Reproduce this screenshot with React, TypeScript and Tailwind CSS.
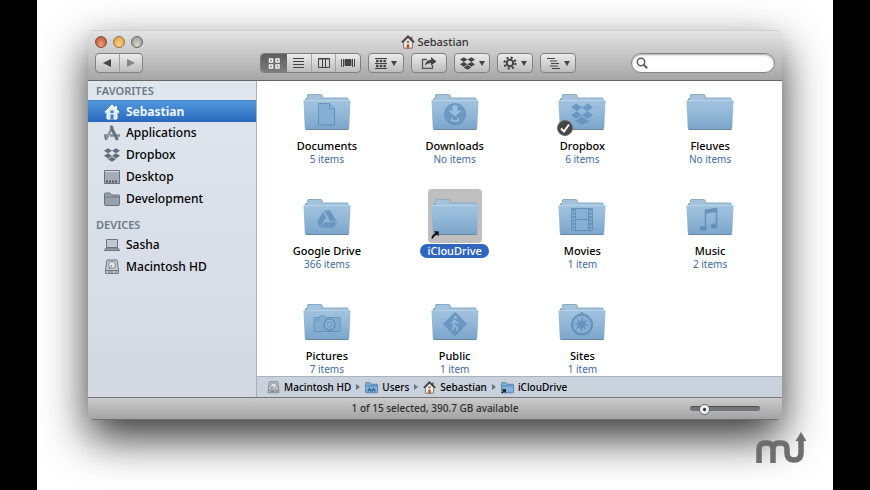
import React from 'react';
import { FaCog, FaDropbox, FaGoogleDrive } from 'react-icons/fa';

type Glyph =
	| 'document'
	| 'download'
	| 'dropbox'
	| 'drive'
	| 'film'
	| 'music'
	| 'camera'
	| 'public'
	| 'compass';

interface FolderItem {
	name: string;
	count?: string;
	glyph?: Glyph;
	synced?: boolean;
	selected?: boolean;
}

const folders: FolderItem[] = [
	{ name: 'Documents', count: '5 items', glyph: 'document' },
	{ name: 'Downloads', count: 'No items', glyph: 'download' },
	{ name: 'Dropbox', count: '6 items', glyph: 'dropbox', synced: true },
	{ name: 'Fleuves', count: 'No items' },
	{ name: 'Google Drive', count: '366 items', glyph: 'drive' },
	{ name: 'iClouDrive', selected: true },
	{ name: 'Movies', count: '1 item', glyph: 'film' },
	{ name: 'Music', count: '2 items', glyph: 'music' },
	{ name: 'Pictures', count: '7 items', glyph: 'camera' },
	{ name: 'Public', count: '1 item', glyph: 'public' },
	{ name: 'Sites', count: '1 item', glyph: 'compass' },
];

const FolderGlyph = ({ glyph }: { glyph: Glyph }) => {
	switch (glyph) {
		case 'document':
			return (
				<path
					d="M15.5 10.5h11l5 5.500v16h-16zM26.500 10.500v5.500h5"
					fill="#84aed2"
					stroke="#5b89b5"
				/>
			);
		case 'download':
			return (
				<>
					<circle cx="24" cy="21" r="10.500" fill="#6594bf" stroke="#5b89b5" />
					<path d="M21.500 12.500h5v5h4l-6.500 6-6.500-6h4z" fill="#9cc2e2" />
					<path d="M21 25v3h6v-3" fill="none" stroke="#9cc2e2" strokeWidth="1.500" />
				</>
			);
		case 'dropbox':
			return (
				<g fill="#6090bc">
					<path d="M18 10.500l6 3.800-5 4-6-4zM30 10.500l-6 3.800 5 4 6-4z" />
					<path d="M13 22l6-3.700 5 4-5.500 3.700zM35 22l-6-3.700-5 4 5.500 3.700z" />
					<path d="M17.500 26.500l1.200.8 5.300-3.800 5.300 3.800 1.200-.8v2L24 32l-6.500-3.500z" />
				</g>
			);
		case 'drive':
			return <FaGoogleDrive x="14" y="11" size={20} color="#6090bc" />;
		case 'film':
			return (
				<>
					<path d="M13.500 10.500h21v22h-21z" fill="#84aed2" stroke="#5b89b5" />
					<path
						d="M15.500 11v22M32.500 11v22"
						stroke="#5b89b5"
						strokeWidth="2.500"
						strokeDasharray="2 1.500"
					/>
					<path d="M17.500 11v21.500M30.500 11v21.500M18 21.500h12" stroke="#5b89b5" />
				</>
			);
		case 'music':
			return (
				<>
					<path d="M19.500 30V12.500l11-2V27" fill="none" stroke="#5b89b5" strokeWidth="1.600" />
					<path d="M19 12l12-2v4l-12 2z" fill="#5b89b5" />
					<ellipse cx="17" cy="30.500" rx="3.400" ry="2.500" fill="#5b89b5" />
					<ellipse cx="28" cy="28" rx="3.400" ry="2.500" fill="#5b89b5" />
				</>
			);
		case 'camera':
			return (
				<>
					<path
						d="M12 14.500h4l1-1.500h4l1 1.500h14q1 0 1 1v12q0 1-1 1H12q-1 0-1-1v-12q0-1 1-1z"
						fill="#7eaad0"
						stroke="#5b89b5"
					/>
					<circle cx="26.500" cy="21.500" r="5.500" fill="#8ab4d8" stroke="#5b89b5" strokeWidth="1.500" />
					<circle cx="26.500" cy="21.500" r="2.500" fill="none" stroke="#5b89b5" />
					<path d="M13 17h4" stroke="#5b89b5" />
				</>
			);
		case 'public':
			return (
				<>
					<path d="M24 9.500 35.500 21 24 32.500 12.500 21z" fill="#6191bd" stroke="#5787b4" />
					<circle cx="24.500" cy="14.500" r="1.500" fill="#9cc2e2" />
					<path
						d="M24 17l-1 5 3 2.500v3.500M23 22l-1.500 5.500M20.500 20.500l3-3 4 3"
						fill="none"
						stroke="#9cc2e2"
						strokeWidth="1.200"
					/>
				</>
			);
		case 'compass':
			return (
				<>
					<circle cx="24" cy="21.500" r="10" fill="#84aed2" stroke="#5b89b5" strokeWidth="2" />
					<circle cx="24" cy="10.500" r="1.500" fill="#5b89b5" />
					<path
						d="M24 14l1.200 4.500 4-2-2.500 4 4.300 1-4.500 1.500 2 4-3.700-2.500L23 29l-1-5-4 2.500 2.200-4-4.200-1.500 4.500-1-2-4 4 2.500z"
						fill="#5b89b5"
					/>
				</>
			);
	}
};

const Folder = ({ glyph }: { glyph?: Glyph }) => (
	<svg viewBox="0 0 48 38" className="w-12 h-[38px]" aria-hidden="true">
		<defs>
			<linearGradient id="folderFront" x1="0" y1="0" x2="0" y2="1">
				<stop offset="0" stopColor="#a2c3de" />
				<stop offset="0.500" stopColor="#90b6d7" />
				<stop offset="1" stopColor="#7aa5cb" />
			</linearGradient>
		</defs>
		<path
			d="M2 9V6q0-1 1-1h1V2.500Q4 1 5.500 1h12Q19 1 19.500 2.500l.5 2h24q1.500 0 1.500 1.500v4z"
			fill="#87adcb"
		/>
		<path d="M5 3q0-1 1-1h11q1 0 1.500 1l.5 2.500H44V7H4z" fill="#a3c3dc" />
		<path
			d="M1.500 7h45q1 0 1 1.200L46.200 35q-.2 1.500-1.700 1.500h-41Q2 36.500 1.800 35L.5 8.200Q.5 7 1.500 7z"
			fill="url(#folderFront)"
		/>
		<path d="M1 7.500h46" stroke="#b7d3e8" />
		<path d="M2.500 36.500h43" stroke="#66879f" />
		{glyph && (
			<g opacity="0.800">
				<FolderGlyph glyph={glyph} />
			</g>
		)}
	</svg>
);

const House = ({ className, white }: { className: string; white?: boolean }) => (
	<svg viewBox="0 0 16 16" className={className} aria-hidden="true">
		<path d="M3 8l5-5 5 5v7H3z" fill={white ? '#d8e9fa' : '#f4f0ea'} stroke={white ? '#fff' : '#6b6560'} />
		<path d="M11 2h2v4h-2z" fill={white ? '#fff' : '#5f5a56'} />
		<path
			d="M1 8.500L8 1.500l7 7"
			fill="none"
			stroke={white ? '#fff' : '#47403b'}
			strokeWidth={white ? 1.500 : 2}
		/>
		<path d="M6.500 10.500h3v5h-3z" fill={white ? '#3f80cc' : '#c0562f'} />
		<path d="M6.500 6.500h3v2.500h-3z" fill={white ? '#3f80cc' : '#8a7d74'} />
	</svg>
);

const Disk = ({ className }: { className: string }) => (
	<svg viewBox="0 0 16 16" className={className} aria-hidden="true">
		<path d="M3 1h10l1.500 10v3.500h-13V11z" fill="#c3c8ce" stroke="#747b83" />
		<circle cx="8" cy="6" r="3.500" fill="#e4e7ea" stroke="#868d95" />
		<path d="M8 6l-3 4" stroke="#747b83" />
		<path d="M2 11.500h12M4 13h5M11 13h2" stroke="#747b83" />
	</svg>
);

const MiniFolder = ({
	className,
	fill,
	stroke,
	children,
}: {
	className: string;
	fill: string;
	stroke: string;
	children?: React.ReactNode;
}) => (
	<svg viewBox="0 0 16 16" className={className} aria-hidden="true">
		<path d="M.5 13.500V3q0-1 1-1H6l1.500 2h7q1 0 1 1v8.500q0 1-1 1h-13q-1 0-1-1z" fill={fill} stroke={stroke} />
		<path d="M1 6h14" stroke={stroke} />
		{children}
	</svg>
);

const SidebarIcon = ({ name }: { name: string }) => {
	const size = 'w-4 h-4';
	switch (name) {
		case 'Sebastian':
			return <House className={size} white />;
		case 'Applications':
			return (
				<svg viewBox="0 0 16 16" className={size} aria-hidden="true">
					<path d="M0 10.500h4M6 10.500h4M12 10.500h4" stroke="#7f8994" strokeWidth="2.500" />
					<path d="M2 14.500L8.500 2" fill="none" stroke="#8b949e" strokeWidth="2.500" />
					<path d="M7 2l6.500 13" stroke="#67717b" strokeWidth="3" />
					<path d="M1 11.500L2 15M6 1l3 1" stroke="#67717b" strokeWidth="1.500" />
				</svg>
			);
		case 'Dropbox':
			return <FaDropbox className="w-4 h-4 text-[#626e7b]" aria-hidden="true" />;
		case 'Desktop':
			return (
				<svg viewBox="0 0 16 16" className={size} aria-hidden="true">
					<path d="M.5 1.500h15v13H.5z" fill="#a3abb4" stroke="#68717b" />
					<path d="M1 2.500h14" stroke="#d7dce1" />
					<path d="M2 12.500h12" stroke="#4f5862" strokeWidth="2" strokeDasharray="2 1" />
				</svg>
			);
		case 'Development':
			return <MiniFolder className={size} fill="#98a2ad" stroke="#68727d" />;
		case 'Sasha':
			return (
				<svg viewBox="0 0 16 16" className={size} aria-hidden="true">
					<path d="M2.500 2.500h11v8h-11z" fill="#c0c7cf" stroke="#6b747e" />
					<path d="M2 11h12l1.500 2.500H.5z" fill="#9aa3ac" stroke="#6b747e" />
				</svg>
			);
		default:
			return <Disk className={size} />;
	}
};

const sections = [
	{
		title: 'FAVORITES',
		items: ['Sebastian', 'Applications', 'Dropbox', 'Desktop', 'Development'],
	},
	{ title: 'DEVICES', items: ['Sasha', 'Macintosh HD'] },
];

const Sidebar = () => (
	<nav
		aria-label="Sidebar"
		className="w-[169px] shrink-0 border-r border-[#a9b0b8] bg-linear-to-b from-[#e0e6ee] to-[#d2d9e3]"
	>
		{sections.map((section) => (
			<div key={section.title} className="mb-[5px]">
				<h2 className="h-[19px] pl-2 pt-[2px] text-[11px] leading-4 font-semibold text-[#6d7a88]">
					{section.title}
				</h2>
				<ul>
					{section.items.map((item) => (
						<li key={item}>
							<a
								href="#"
								className={
									item === 'Sebastian'
										? 'flex h-[22px] items-center gap-[6px] border-t border-[#4280c2] bg-linear-to-b from-[#5298dc] to-[#2a68bd] pl-4 text-[12px] font-bold text-[#eef5ff]'
										: 'flex h-[22px] items-center gap-[6px] pl-4 text-[12px] font-medium text-black'
								}
							>
								<SidebarIcon name={item} />
								{item}
							</a>
						</li>
					))}
				</ul>
			</div>
		))}
	</nav>
);

const Caret = () => (
	<svg viewBox="0 0 6 5" className="w-[6px] h-[5px]" aria-hidden="true">
		<path d="M0 0h6L3 5z" fill="#444" />
	</svg>
);

const toolButton =
	'flex h-5 w-9 items-center justify-center gap-1 rounded-[4px] border border-[#828282] bg-linear-to-b from-[#ececec] to-[#bcbcbc] text-[#444]';

const ViewSwitch = () => (
	<div className="flex h-5 w-[101px] overflow-hidden rounded-[4px] border border-[#7d7d7d] bg-linear-to-b from-[#ececec] to-[#bcbcbc]">
		<button
			aria-label="Icon view"
			aria-pressed="true"
			className="flex w-[26px] items-center justify-center bg-linear-to-b from-[#5d5d5d] to-[#7c7c7c]"
		>
			<svg viewBox="0 0 12 11" className="w-3 h-[11px]" fill="none" stroke="#f2f2f2" strokeWidth="1.500">
				<path d="M1.500 1h3v3h-3zM8 1h3v3H8zM1.500 7h3v3h-3zM8 7h3v3H8z" />
			</svg>
		</button>
		<button aria-label="List view" className="flex flex-1 items-center justify-center border-r border-[#a5a5a5]">
			<svg viewBox="0 0 11 10" className="w-[11px] h-[10px]" stroke="#444">
				<path d="M0 .5h11M0 3.500h11M0 6.500h11M0 9.500h11" />
			</svg>
		</button>
		<button aria-label="Column view" className="flex flex-1 items-center justify-center border-r border-[#a5a5a5]">
			<svg viewBox="0 0 12 10" className="w-3 h-[10px]" fill="none" stroke="#444">
				<path d="M.5 .5h11v9H.5zM0 1h12M4.500 1v9M7.500 1v9" />
			</svg>
		</button>
		<button aria-label="Cover flow" className="flex flex-1 items-center justify-center">
			<svg viewBox="0 0 14 10" className="w-[14px] h-[10px]" stroke="#444">
				<path d="M.5 1v8M2.500 1v8M11.500 1v8M13.500 1v8" />
				<path d="M4 1.500h6v6H4z" fill="#444" />
			</svg>
		</button>
	</div>
);

const Toolbar = () => (
	<header className="h-[51px] border-t border-b border-t-[#cfcfcf] border-b-[#666] bg-linear-to-b from-[#e4e4e4] to-[#a6a6a6] px-[7px]">
		<div className="relative flex h-[22px] items-center justify-center">
			<div className="absolute left-0 flex gap-[6px]">
				<button aria-label="Close" className="size-3 rounded-full border border-[#7e4a3e] bg-radial-[at_50%_80%] from-[#f0a07c] to-[#b5482e]" />
				<button aria-label="Minimize" className="size-3 rounded-full border border-[#96703d] bg-radial-[at_50%_80%] from-[#f8d183] to-[#dc9b48]" />
				<button aria-label="Zoom" className="size-3 rounded-full border border-[#5e646a] bg-radial-[at_50%_80%] from-[#dcd6b8] to-[#8b939c]" />
			</div>
			<h1 className="flex items-center gap-[2px] text-[11px] leading-4 font-medium text-[#333]">
				<House className="size-[14px]" />
				Sebastian
			</h1>
		</div>
		<div className="flex items-center">
			<div className="w-[165px] shrink-0">
				<div className="flex h-5 w-12 rounded-[4px] border border-[#828282] bg-linear-to-b from-[#ececec] to-[#bcbcbc]">
					<button aria-label="Back" className="flex flex-1 items-center justify-center border-r border-[#a0a0a0]">
						<svg viewBox="0 0 8 8" className="size-2">
							<path d="M8 0v8L0 4z" fill="#484848" />
						</svg>
					</button>
					<button aria-label="Forward" className="flex flex-1 items-center justify-center">
						<svg viewBox="0 0 8 8" className="size-2">
							<path d="M0 0v8l8-4z" fill="#858585" />
						</svg>
					</button>
				</div>
			</div>
			<div className="flex gap-[7px]">
				<ViewSwitch />
				<button aria-label="Arrange" className={toolButton}>
					<svg viewBox="0 0 12 11" className="w-3 h-[11px]" stroke="#444">
						<path d="M0 .5h12M0 5.500h12M0 10.500h12" />
						<path d="M1 3h10M1 8h10" strokeWidth="2.500" strokeDasharray="2.500 1.200" />
					</svg>
					<Caret />
				</button>
				<button aria-label="Share" className={toolButton}>
					<svg viewBox="0 0 16 12" className="w-4 h-3">
						<path d="M6 2.500H1.500v9h10V8" fill="none" stroke="#555" strokeWidth="1.300" />
						<path d="M4 8.500Q4.500 3 10 3V0l5.500 4.500L10 8.500V6Q6 6 4 8.500z" fill="#444" />
					</svg>
				</button>
				<button aria-label="Dropbox" className={toolButton}>
					<FaDropbox size={15} />
					<Caret />
				</button>
				<button aria-label="Action" className={toolButton}>
					<svg viewBox="0 0 14 14" className="size-[14px]" fill="none" stroke="#444">
						<circle cx="7" cy="7" r="3.200" strokeWidth="2" />
						<circle cx="7" cy="7" r="5.500" strokeWidth="2.200" strokeDasharray="2.100 2.219" />
					</svg>
					<Caret />
				</button>
				<button aria-label="Outline" className={toolButton}>
					<svg viewBox="0 0 13 11" className="w-[13px] h-[11px]" stroke="#444">
						<path d="M0 .5h8M3 3h7M4 5.500h8M3 8h8M5 10.500h8" />
					</svg>
					<Caret />
				</button>
			</div>
			<label className="ml-auto flex h-5 w-36 items-center rounded-full border border-[#858585] bg-white px-1 shadow-[inset_0_1px_2px_rgba(0,0,0,0.35)]">
				<svg viewBox="0 0 12 12" className="size-3 shrink-0" fill="none" stroke="#5b5b5b">
					<circle cx="5" cy="5" r="3.700" strokeWidth="1.500" />
					<path d="M7.700 7.700l3.500 3.500" strokeWidth="2" />
				</svg>
				<input type="search" aria-label="Search" className="min-w-0 flex-1 bg-transparent px-1 text-[11px] outline-none" />
			</label>
		</div>
	</header>
);

const FolderCell = ({ item }: { item: FolderItem }) => (
	<button className="flex flex-col items-center">
		<span
			className={
				item.selected
					? 'relative flex h-[54px] w-[54px] justify-center rounded-[4px] bg-[#bfbfbf] pt-[9px]'
					: 'relative flex h-[54px] w-[54px] justify-center pt-[9px]'
			}
		>
			<Folder glyph={item.glyph} />
			{item.synced && (
				<svg viewBox="0 0 16 16" className="absolute bottom-[2px] left-[2px] size-4" aria-hidden="true">
					<circle cx="8" cy="8" r="7.500" fill="#454545" stroke="#6b6b6b" />
					<path d="M4 8.500l3 3 5-7" fill="none" stroke="#fff" strokeWidth="2" />
				</svg>
			)}
			{item.selected && (
				<svg viewBox="0 0 8 8" className="absolute bottom-[4px] left-[3px] size-2" aria-hidden="true">
					<path d="M2 0h6v6L6 4Q3 5 2 8H0Q0 4 4 2z" fill="#111" stroke="#fff" strokeWidth="0.400" />
				</svg>
			)}
		</span>
		<span
			className={
				item.selected
					? 'mt-px h-[14px] rounded-full bg-[#2f66c0] px-[7px] text-[11px] leading-[14px] font-medium text-white'
					: 'mt-px h-[14px] text-[11px] leading-[14px] font-medium text-black'
			}
		>
			{item.name}
		</span>
		{item.count && <span className="h-3 text-[10px] leading-3 text-[#3d6c9e]">{item.count}</span>}
	</button>
);

const Crumb = ({ icon, label }: { icon: React.ReactNode; label: string }) => (
	<a href="#" className="flex items-center gap-1">
		{icon}
		{label}
	</a>
);

const CrumbArrow = () => (
	<svg viewBox="0 0 4 6" className="w-1 h-[6px]" aria-hidden="true">
		<path d="M0 0v6l4-3z" fill="#6c747d" />
	</svg>
);

const PathBar = () => (
	<div className="flex h-[21px] items-center gap-[5px] border-t border-[#aab2bc] bg-[#c9d1dc] pl-[10px] text-[10px] font-medium text-black">
		<Crumb icon={<Disk className="size-[13px]" />} label="Macintosh HD" />
		<CrumbArrow />
		<Crumb
			icon={
				<MiniFolder className="size-[13px]" fill="#85b1da" stroke="#4478a8">
					<path d="M4 13v-2h3v2M9 13v-2h3v2M5.500 8v2M10.500 8v2" fill="none" stroke="#2f6296" strokeWidth="1.500" />
				</MiniFolder>
			}
			label="Users"
		/>
		<CrumbArrow />
		<Crumb icon={<House className="size-[13px]" />} label="Sebastian" />
		<CrumbArrow />
		<Crumb
			icon={
				<MiniFolder className="size-[13px]" fill="#85b1da" stroke="#4478a8">
					<path d="M1 10h5v5L4 13l-2 2H0l3-3z" fill="#111" />
				</MiniFolder>
			}
			label="iClouDrive"
		/>
	</div>
);

const StatusBar = () => (
	<footer className="relative flex h-[22px] items-center justify-center border-t border-[#777] bg-linear-to-b from-[#cbcbcb] to-[#a3a3a3] text-[10px] font-medium text-[#2e2e2e]">
		1 of 15 selected, 390.7 GB available
		<input
			type="range"
			aria-label="Icon size"
			min={0}
			max={100}
			defaultValue={15}
			className="absolute right-[22px] h-[5px] w-[70px] appearance-none rounded-full border-t border-[#4d4d4d] bg-[#737478] [&::-webkit-slider-thumb]:size-[11px] [&::-webkit-slider-thumb]:appearance-none [&::-webkit-slider-thumb]:rounded-full [&::-webkit-slider-thumb]:border [&::-webkit-slider-thumb]:border-[#666] [&::-webkit-slider-thumb]:bg-radial [&::-webkit-slider-thumb]:from-[#333] [&::-webkit-slider-thumb]:from-15% [&::-webkit-slider-thumb]:to-[#f2f2f2] [&::-webkit-slider-thumb]:to-35%"
		/>
	</footer>
);

const Logo = () => (
	<svg viewBox="0 0 50 32" className="w-[50px] h-8" role="img" aria-label="MU">
		<path
			d="M3 31V17q0-6 6-6h2q6 0 6 6v14M17 31V17q0-6 6-6h2q6 0 6 6v4q0 7 7 7t7-7V8"
			fill="none"
			stroke="#6d6d6d"
			strokeWidth="5.500"
		/>
		<path d="M45 0l5.500 9h-11z" fill="#6d6d6d" />
	</svg>
);

export default function App() {
	return (
		<div className="min-h-screen bg-black px-[37px] font-['Noto_Sans',sans-serif]">
			<main className="relative min-h-screen overflow-hidden bg-white px-[51px] pt-[30px]">
				<section className="overflow-hidden rounded-[5px] border-b border-[#6e6e6e] shadow-[0_18px_44px_rgba(0,0,0,0.8)]">
					<Toolbar />
					<div className="flex">
						<Sidebar />
						<div className="flex min-w-0 flex-1 flex-col bg-white">
							<div className="grid grid-cols-4 gap-y-6 pt-[3px] pr-2 pb-px pl-[6px]">
								{folders.map((item) => (
									<FolderCell key={item.name} item={item} />
								))}
							</div>
							<PathBar />
						</div>
					</div>
					<StatusBar />
				</section>
				<div className="absolute right-[27px] bottom-[26px]">
					<Logo />
				</div>
			</main>
		</div>
	);
}
